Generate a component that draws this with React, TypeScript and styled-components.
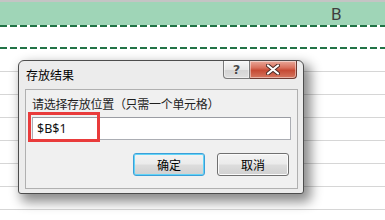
import styled, { createGlobalStyle } from 'styled-components'

const GlobalStyle = createGlobalStyle`
  html, body { margin: 0; padding: 0; background: #fff; }
  body {
    width: 385px;
    height: 220px;
    overflow: hidden;
    font-family: "Noto Sans CJK SC", "Noto Sans", sans-serif;
  }
  * { box-sizing: border-box; }
`

const Sheet = styled.div`
  position: relative;
  width: 385px;
  height: 220px;
  overflow: hidden;
  background: #fff;
`

const ColumnHeader = styled.div`
  height: 25px;
  border-top: 2px solid #c4c4c4;
  background: #9fd5b7;
  display: flex;
  align-items: center;
  padding-left: 331px;
  font-family: Roboto, "Liberation Sans", sans-serif;
  font-size: 17px;
  color: #3f3f3f;
`

const ants = 'repeating-linear-gradient(90deg, #217346 0 7px, transparent 7px 10px)'

const MarchRow = styled.div`
  height: 24px;
  background:
    ${ants} left top / 100% 2px no-repeat,
    ${ants} left bottom / 100% 2px no-repeat;
`

const GridRow = styled.div`
  height: 23px;
  border-bottom: 1px solid #d6d6d6;
`

const Dialog = styled.div`
  position: absolute;
  left: 18px;
  top: 60px;
  width: 286px;
  height: 134px;
  border: 1px solid #4d4d4d;
  border-radius: 6px 6px 3px 3px;
  background: #ececec;
  box-shadow: 5px 6px 12px 2px rgba(0, 0, 0, 0.45);
  display: flex;
  flex-direction: column;
`

const TitleBar = styled.div`
  height: 27px;
  display: flex;
  align-items: flex-start;
`

const Title = styled.div`
  flex: 1;
  padding: 6px 0 0 7px;
  font-size: 12px;
  line-height: 16px;
  color: #000;
`

const CaptionButtons = styled.div`
  display: flex;
  margin-right: 6px;
`

const CaptionButton = styled.div<{ $close?: boolean }>`
  height: 18px;
  width: ${p => (p.$close ? 47 : 27)}px;
  display: flex;
  align-items: center;
  justify-content: center;
  border: 1px solid ${p => (p.$close ? '#6e3a32' : '#7a7a7a')};
  border-top: none;
  border-radius: ${p => (p.$close ? '0 0 4px 0' : '0 0 0 4px')};
  border-left-width: ${p => (p.$close ? 0 : 1)}px;
  background: ${p =>
    p.$close
      ? 'linear-gradient(#e9a99a 0%, #d8705c 40%, #c64a34 55%, #d57760 100%)'
      : 'linear-gradient(#f7f7f7 0%, #e6e6e6 50%, #d4d4d4 55%, #dedede 100%)'};
  box-shadow: inset 0 0 0 1px rgba(255, 255, 255, 0.45);
`

const HelpGlyph = styled.span`
  font-family: "DejaVu Sans", sans-serif;
  font-weight: bold;
  font-size: 13px;
  line-height: 13px;
  color: #4a4a4a;
  text-shadow: 0 0 1px #fff, 0 0 1px #fff;
`

const Client = styled.div`
  margin: 1px 5px 4px 6px;
  flex: 1;
  border: 1px solid #b0b0b0;
  background: #f0f0f0;
  padding: 6px 6px 0 6px;
  display: flex;
  flex-direction: column;
`

const Label = styled.div`
  font-size: 12px;
  line-height: 16px;
  color: #1e1e1e;
  letter-spacing: -0.3px;
`

const InputWrap = styled.div`
  position: relative;
  margin-top: 5px;
  width: 259px;
`

const Input = styled.div`
  height: 23px;
  border: 1px solid #abadb3;
  border-top-color: #9a9ca3;
  background: #fff;
  padding-left: 4px;
  display: flex;
  align-items: center;
  font-family: "Noto Sans", "Noto Sans CJK SC", sans-serif;
  font-size: 12.5px;
  color: #111;
`

const Highlight = styled.div`
  position: absolute;
  left: -4px;
  top: -5px;
  width: 72px;
  height: 30px;
  border: 3px solid #e93b3b;
  pointer-events: none;
`

const ButtonRow = styled.div`
  display: flex;
  justify-content: flex-end;
  gap: 12px;
  margin-top: 13px;
  padding-right: 2px;
`

const Button = styled.div<{ $default?: boolean }>`
  width: 72px;
  height: 23px;
  display: flex;
  align-items: center;
  justify-content: center;
  border: 1px solid ${p => (p.$default ? '#3c9fd8' : '#707070')};
  border-radius: 3px;
  background: linear-gradient(#f3f3f3 0%, #ebebeb 48%, #dddddd 52%, #d0d0d0 100%);
  box-shadow: ${p => (p.$default ? 'inset 0 0 0 1px #62d4f7' : 'inset 0 0 0 1px #fbfbfb')};
  font-size: 12px;
  color: #000;
`

export default function App() {
  return (
    <Sheet>
      <GlobalStyle />
      <ColumnHeader>B</ColumnHeader>
      <MarchRow />
      {Array.from({ length: 7 }).map((_, i) => (
        <GridRow key={i} />
      ))}

      <Dialog>
        <TitleBar>
          <Title>存放结果</Title>
          <CaptionButtons>
            <CaptionButton>
              <HelpGlyph>?</HelpGlyph>
            </CaptionButton>
            <CaptionButton $close>
              <svg width="14" height="11" viewBox="0 0 14 11">
                <path d="M2 1.5 L12 9.5 M12 1.5 L2 9.5" stroke="#4a2b26" strokeWidth="4" strokeLinecap="round" />
                <path d="M2 1.5 L12 9.5 M12 1.5 L2 9.5" stroke="#fff" strokeWidth="2.2" strokeLinecap="round" />
              </svg>
            </CaptionButton>
          </CaptionButtons>
        </TitleBar>
        <Client>
          <Label>请选择存放位置（只需一个单元格）</Label>
          <InputWrap>
            <Input>$B$1</Input>
            <Highlight />
          </InputWrap>
          <ButtonRow>
            <Button $default>确定</Button>
            <Button>取消</Button>
          </ButtonRow>
        </Client>
      </Dialog>
    </Sheet>
  )
}
